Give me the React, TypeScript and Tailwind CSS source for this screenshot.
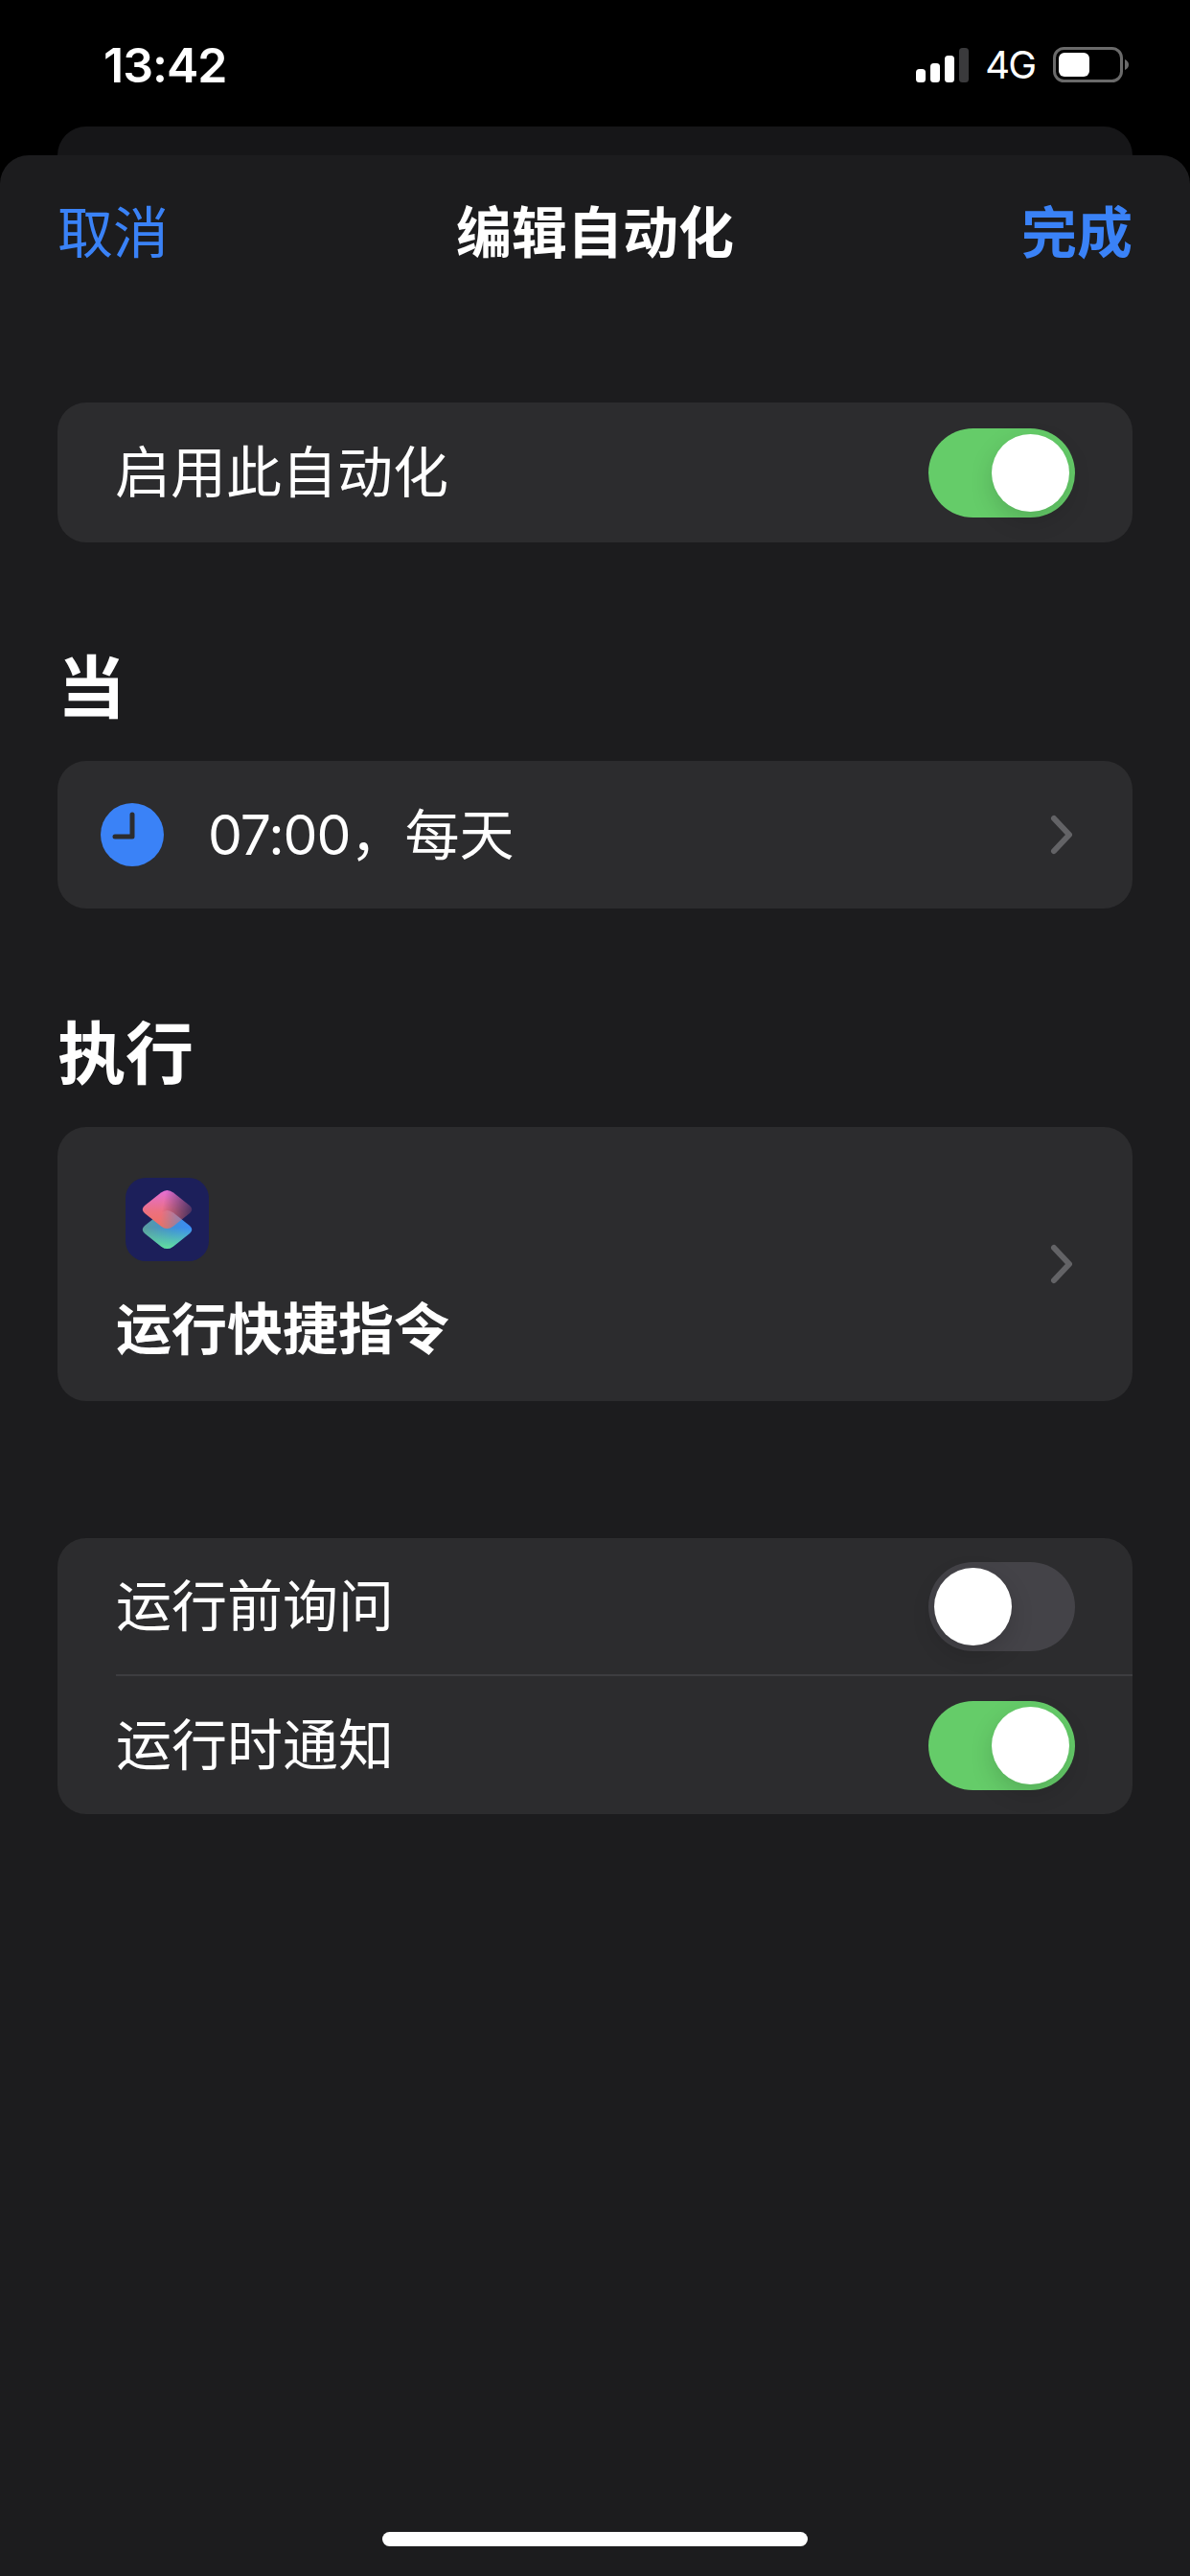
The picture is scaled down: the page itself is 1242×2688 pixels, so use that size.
import React from "react";

function Toggle({ on }: { on: boolean }) {
  return (
    <div
      className={`flex h-[93px] w-[153px] shrink-0 items-center rounded-full p-[6px] ${
        on ? "justify-end bg-[#65cc69]" : "justify-start bg-[#444348]"
      }`}
    >
      <div className="h-[81px] w-[81px] rounded-full bg-white shadow-[0_9px_24px_rgba(0,0,0,0.15)]" />
    </div>
  );
}

function Chevron() {
  return (
    <svg width="28" height="46" viewBox="0 0 28 46" className="shrink-0">
      <path d="M6 6 L22 23 L6 40" fill="none" stroke="#636366" strokeWidth="6" strokeLinecap="round" strokeLinejoin="round" />
    </svg>
  );
}

function ClockIcon() {
  return (
    <svg width="66" height="66" viewBox="0 0 66 66" className="shrink-0">
      <circle cx="33" cy="33" r="33" fill="#3a82f7" />
      <path d="M33 12 V35 H15" fill="none" stroke="#2c2c2e" strokeWidth="5" strokeLinecap="round" strokeLinejoin="round" />
    </svg>
  );
}

const TOP = "M20 29 L37 15.5 Q43.5 10.5 50 15.5 L67 29 Q71.5 33 67 37 L50 50.5 Q43.5 55.5 37 50.5 L20 37 Q15.5 33 20 29Z";
const BOTTOM = "M20 50 L37 36.5 Q43.5 31.5 50 36.5 L67 50 Q71.5 54 67 58 L50 71.5 Q43.5 76.5 37 71.5 L20 58 Q15.5 54 20 50Z";

function ShortcutsIcon() {
  return (
    <svg width="87" height="87" viewBox="0 0 87 87" className="block">
      <defs>
        <linearGradient id="topV" x1="0" y1="0" x2="0" y2="1">
          <stop offset="0" stopColor="#e46fd6" />
          <stop offset="0.55" stopColor="#ec7080" />
          <stop offset="1" stopColor="#f0705f" />
        </linearGradient>
        <linearGradient id="botH" x1="0" y1="0" x2="1" y2="0">
          <stop offset="0" stopColor="#5a9c9e" />
          <stop offset="0.6" stopColor="#3f8fd8" />
          <stop offset="1" stopColor="#3a8cf8" />
        </linearGradient>
        <linearGradient id="botV" x1="0" y1="0" x2="0" y2="1">
          <stop offset="0.45" stopColor="#62dca0" stopOpacity="0" />
          <stop offset="1" stopColor="#62e09e" stopOpacity="1" />
        </linearGradient>
        <linearGradient id="fade" gradientUnits="userSpaceOnUse" x1="38" y1="34" x2="68" y2="40">
          <stop offset="0" stopColor="#fff" />
          <stop offset="1" stopColor="#3a3a3a" />
        </linearGradient>
        <mask id="topMask" maskUnits="userSpaceOnUse" x="0" y="0" width="87" height="87">
          <rect width="87" height="87" fill="url(#fade)" />
        </mask>
      </defs>
      <rect width="87" height="87" rx="21" fill="#1c1f5a" />
      <path d={BOTTOM} fill="url(#botH)" />
      <path d={BOTTOM} fill="url(#botV)" />
      <path d={TOP} fill="url(#topV)" mask="url(#topMask)" />
    </svg>
  );
}

function SignalIcon() {
  return (
    <svg width="56" height="36" viewBox="0 0 56 36" className="shrink-0">
      <rect x="0" y="22" width="10" height="14" rx="3.5" fill="#fff" />
      <rect x="15" y="16" width="10" height="20" rx="3.5" fill="#fff" />
      <rect x="30" y="8" width="10" height="28" rx="3.5" fill="#fff" />
      <rect x="45" y="0" width="10" height="36" rx="3.5" fill="#3a3a3c" />
    </svg>
  );
}

function BatteryIcon() {
  return (
    <svg width="80" height="37" viewBox="0 0 80 37" className="shrink-0">
      <rect x="1.5" y="1.5" width="70" height="34" rx="10" fill="none" stroke="#6a6a6a" strokeWidth="3" />
      <rect x="6" y="6" width="32" height="25" rx="6" fill="#fff" />
      <path d="M75 13 Q79 15 79 18.5 Q79 22 75 24 Z" fill="#6a6a6a" />
    </svg>
  );
}

export default function App() {
  return (
    <div className="flex h-[2688px] w-[1242px] flex-col bg-black font-['Inter','Noto_Sans_CJK_SC',sans-serif] text-white">
      <div className="flex h-[132px] shrink-0 items-start justify-between pl-[108px] pr-[63px] pt-[43px]">
        <span className="text-[50px] font-semibold leading-[50px] tracking-[-1px]">13:42</span>
        <div className="flex items-center pt-[6px]">
          <SignalIcon />
          <span className="ml-[16px] text-[40px] leading-[36px] tracking-[-2px]">4G</span>
          <div className="ml-[19px] flex">
            <BatteryIcon />
          </div>
        </div>
      </div>

      <div className="mx-[60px] h-[30px] shrink-0 rounded-t-[30px] bg-[#161618]" />

      <div className="flex flex-1 flex-col rounded-t-[30px] bg-[#1c1c1e] px-[60px]">
        <div className="flex h-[162px] shrink-0 items-center justify-between">
          <span className="w-[200px] text-[58px] leading-none text-[#3a82f7]">取消</span>
          <span className="text-[58px] font-semibold leading-none">编辑自动化</span>
          <span className="w-[200px] text-right text-[58px] font-semibold leading-none text-[#3a82f7]">完成</span>
        </div>

        <div className="mt-[96px] flex h-[146px] items-center justify-between rounded-[30px] bg-[#2c2c2e] pl-[60px] pr-[60px]">
          <span className="text-[58px] leading-none">启用此自动化</span>
          <Toggle on />
        </div>

        <div className="mt-[114px] h-[70px] text-[71px] font-bold leading-[74px]">当</div>
        <div className="mt-[44px] flex h-[154px] items-center justify-between rounded-[30px] bg-[#2c2c2e] pl-[45px] pr-[60px]">
          <div className="flex items-center">
            <ClockIcon />
            <span className="ml-[46px] text-[57px] font-normal leading-none tracking-[-1px]">
              07:00<span className="tracking-normal">，每天</span>
            </span>
          </div>
          <Chevron />
        </div>

        <div className="mt-[114px] h-[70px] text-[71px] font-bold leading-[74px]">执行</div>
        <div className="mt-[44px] flex h-[286px] items-center justify-between rounded-[30px] bg-[#2c2c2e] pl-[61px] pr-[60px]">
          <div className="flex flex-col pt-[6px]">
            <div className="ml-[10px]">
              <ShortcutsIcon />
            </div>
            <span className="mt-[42px] text-[58px] font-bold leading-none">运行快捷指令</span>
          </div>
          <Chevron />
        </div>

        <div className="mt-[143px] flex flex-col rounded-[30px] bg-[#2c2c2e]">
          <div className="ml-[61px] flex h-[144px] items-center justify-between border-b-2 border-[#3d3d40] pr-[60px]">
            <span className="text-[58px] leading-none">运行前询问</span>
            <Toggle on={false} />
          </div>
          <div className="ml-[61px] flex h-[144px] items-center justify-between pr-[60px]">
            <span className="text-[58px] leading-none">运行时通知</span>
            <Toggle on />
          </div>
        </div>

        <div className="mt-auto mb-[31px] h-[15px] w-[444px] self-center rounded-full bg-white" />
      </div>
    </div>
  );
}
